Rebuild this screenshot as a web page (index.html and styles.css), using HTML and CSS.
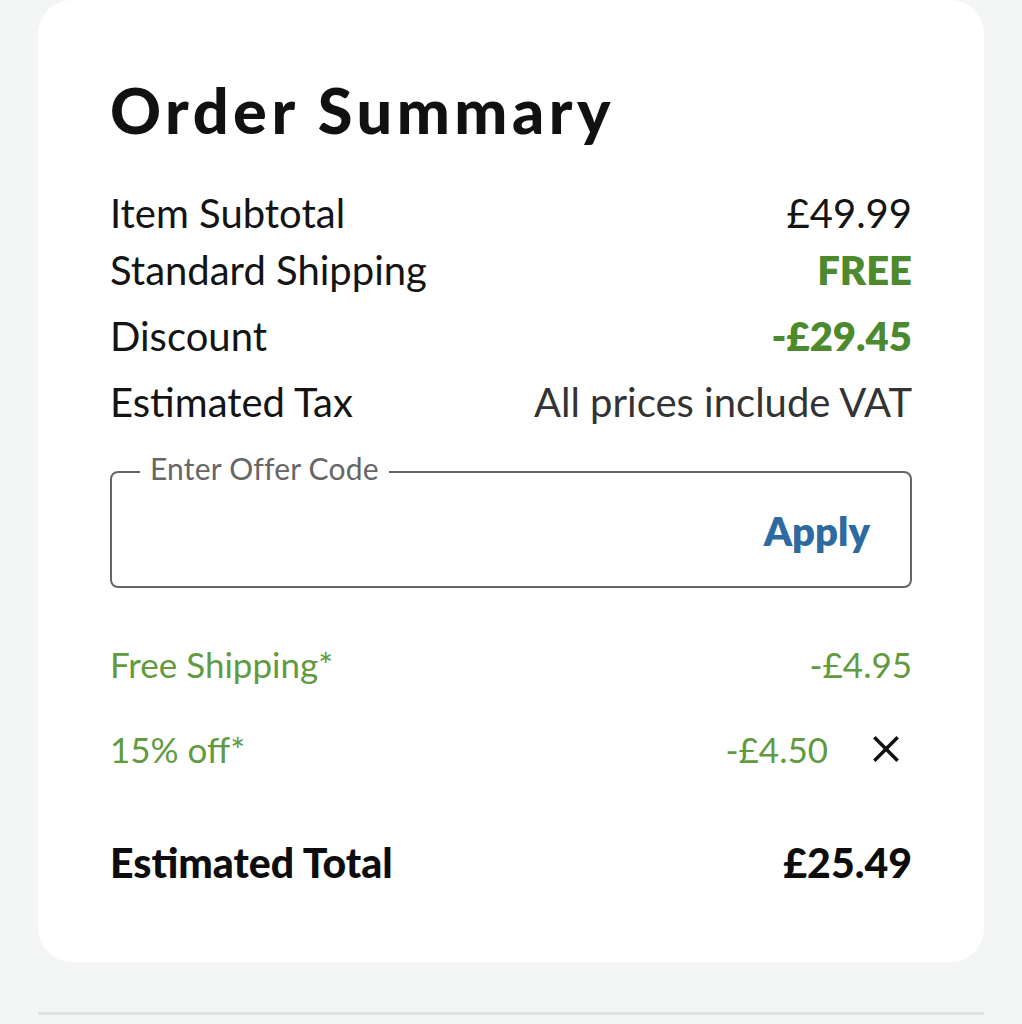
FILE: index.html
```html
<!DOCTYPE html>
<html lang="en">
<head>
<meta charset="utf-8">
<title>Order Summary</title>
<link rel="stylesheet" href="styles.css">
</head>
<body>
<main class="page">
  <section class="card">
    <h1 class="title">Order Summary</h1>

    <div class="lines">
      <div class="row row-first">
        <span>Item Subtotal</span>
        <span>£49.99</span>
      </div>
      <div class="row">
        <span>Standard Shipping</span>
        <span class="strong-green">FREE</span>
      </div>
      <div class="row">
        <span>Discount</span>
        <span class="strong-green">-£29.45</span>
      </div>
      <div class="row">
        <span>Estimated Tax</span>
        <span class="muted">All prices include VAT</span>
      </div>
    </div>

    <fieldset class="offer">
      <legend class="offer-label">Enter Offer Code</legend>
      <input class="offer-input" type="text" aria-label="Enter Offer Code">
      <button class="offer-apply" type="button">Apply</button>
    </fieldset>

    <div class="promos">
      <div class="promo">
        <span>Free Shipping*</span>
        <span>-£4.95</span>
      </div>
      <div class="promo">
        <span>15% off*</span>
        <span class="promo-right">
          <span>-£4.50</span>
          <button class="remove" type="button" aria-label="Remove">
            <svg viewBox="0 0 24 24" width="28" height="28"><path d="M2 2 L22 22 M22 2 L2 22" stroke="#111" stroke-width="3" fill="none" stroke-linecap="butt"/></svg>
          </button>
        </span>
      </div>
    </div>

    <div class="total">
      <span>Estimated Total</span>
      <span>£25.49</span>
    </div>
  </section>
  <hr class="divider">
</main>
</body>
</html>
```

FILE: styles.css
```css
* {
  box-sizing: border-box;
}

html, body {
  margin: 0;
  padding: 0;
}

body {
  background: #f4f6f6;
  font-family: "Lato", "Noto Sans", sans-serif;
  color: #141414;
}

.page {
  padding: 0 38px;
}

.card {
  background: #ffffff;
  border-radius: 34px;
  height: 962px;
  padding: 72px 72px 0 72px;
}

.title {
  margin: 0;
  font-family: "Lato", sans-serif;
  font-weight: 900;
  font-size: 63px;
  line-height: 76px;
  letter-spacing: 4.5px;
  color: #111;
}

.lines {
  margin-top: 41px;
  display: flex;
  flex-direction: column;
}

.row {
  display: flex;
  justify-content: space-between;
  align-items: center;
  font-size: 40px;
  line-height: 66px;
}

.row-first {
  line-height: 48px;
}

.strong-green {
  color: #4d8a2e;
  font-weight: 800;
}

.muted {
  color: #333;
}

.offer {
  margin: 16px 0 0 0;
  padding: 0 40px 0 38px;
  height: 137px;
  border: 2px solid #666;
  border-radius: 8px;
  display: flex;
  align-items: center;
  gap: 20px;
}

/* extra bottom padding lifts the label text slightly above the border line */
.offer-label {
  padding: 0 10px 8px 10px;
  margin-left: -10px;
  font-size: 30px;
  color: #666;
  line-height: 34px;
  letter-spacing: 0.2px;
}

.offer-input {
  flex: 1;
  border: none;
  outline: none;
  font: inherit;
  font-size: 30px;
  background: transparent;
  margin-top: -18px;
}

.offer-apply {
  border: none;
  background: none;
  padding: 0;
  font-family: "Lato", sans-serif;
  font-weight: 800;
  font-size: 40px;
  color: #2d6a9f;
  margin-top: -18px;
}

.promos {
  margin-top: 54px;
  display: flex;
  flex-direction: column;
  gap: 41px;
}

.promo {
  display: flex;
  justify-content: space-between;
  align-items: center;
  font-size: 35px;
  line-height: 44px;
  color: #619a3f;
}

.promo-right {
  display: flex;
  align-items: center;
  gap: 44px;
}

.remove {
  border: none;
  background: none;
  padding: 0 12px 0 0;
  display: flex;
}

.total {
  margin-top: 68px;
  display: flex;
  justify-content: space-between;
  align-items: center;
  font-size: 41px;
  line-height: 48px;
  font-weight: 900;
  color: #0d0d0d;
}

.divider {
  margin: 50px 0 0 0;
  border: none;
  height: 3px;
  background: #dfe1e2;
}
```
